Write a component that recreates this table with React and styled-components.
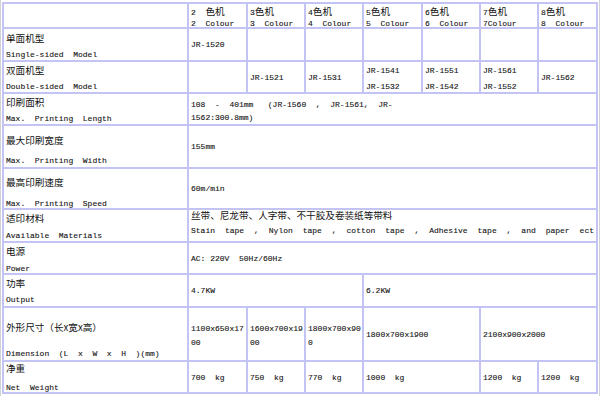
import React from 'react';
import styled, { createGlobalStyle } from 'styled-components';

const Global = createGlobalStyle`
  html, body {
    margin: 0;
    background: #fff;
  }
  body {
    width: 600px;
    height: 396px;
    overflow: hidden;
  }
`;

const Page = styled.div`
  box-sizing: border-box;
  width: 600px;
  height: 396px;
  padding: 2px 1px 0 1px;
  border-left: 1px solid #d2d2d2;
  border-right: 1px solid #d2d2d2;
  font-family: "Liberation Mono", "Noto Sans CJK SC", monospace;
  font-size: 8px;
  color: #111;
  -webkit-text-stroke: 0.1px #111;
`;

const line = '#c3c3f4';

const Sheet = styled.div`
  display: grid;
  grid-template-columns: 185px 59px 58px 58px 59px 58px 58px 59px;
  grid-template-rows: 25px 33px 32px 32px 43px 41px 33px 32px 33px 54px 32px;
  border-left: 2px solid ${line};
  border-top: 2px solid ${line};
`;

const Cell = styled.div`
  box-sizing: border-box;
  grid-column: span ${(p) => p.$span || 1};
  display: flex;
  flex-direction: column;
  justify-content: center;
  gap: ${(p) => p.$gap || 0}px;
  padding: ${(p) => (p.$shift > 0 ? p.$shift : 0)}px 2px
    ${(p) => (p.$shift < 0 ? -p.$shift : 0)}px;
  border-right: 2px solid ${line};
  border-bottom: 2px solid ${line};
  line-height: 11px;
  white-space: pre;
  overflow: visible;
  min-width: 0;
`;

const Zh = styled.span`
  font-family: "Noto Sans CJK SC", sans-serif;
  font-size: 9.6px;
  -webkit-text-stroke: 0;
  color: #111;
`;

const Justify = styled.div`
  white-space: normal;
  text-align: justify;
  text-align-last: justify;
`;

const Label = ({ zh, en, gap, shift }) => (
  <Cell $gap={gap} $shift={shift}>
    <Zh>{zh}</Zh>
    <span>{en}</span>
  </Cell>
);

const heads = [
  ['2  ', '2  Colour'],
  ['3', '3  Colour'],
  ['4', '4  Colour'],
  ['5', '5  Colour'],
  ['6', '6  Colour'],
  ['7', '7Colour'],
  ['8', '8  Colour'],
];

const TwoLine = ({ a, b, gap, shift, span }) => (
  <Cell $gap={gap} $shift={shift} $span={span}>
    <span>{a}</span>
    <span>{b}</span>
  </Cell>
);

export default function App() {
  return (
    <Page>
      <Global />
      <Sheet>
        <Cell />
        {heads.map(([a, b]) => (
          <Cell key={b} $shift={4}>
            <span>
              {a}
              <Zh>色机</Zh>
            </span>
            <span>{b}</span>
          </Cell>
        ))}

        <Label zh="单面机型" en="Single-sided  Model" gap={5} shift={3} />
        <Cell>JR-1520</Cell>
        <Cell />
        <Cell />
        <Cell />
        <Cell />
        <Cell />
        <Cell />

        <Label zh="双面机型" en="Double-sided  Model" gap={5} shift={2} />
        <Cell />
        <Cell>JR-1521</Cell>
        <Cell>JR-1531</Cell>
        <TwoLine a="JR-1541" b="JR-1532" gap={5} shift={2} />
        <TwoLine a="JR-1551" b="JR-1542" gap={5} shift={2} />
        <TwoLine a="JR-1561" b="JR-1552" gap={5} shift={2} />
        <Cell>JR-1562</Cell>

        <Label zh="印刷面积" en="Max.  Printing  Length" gap={5} shift={2} />
        <TwoLine
          a="108  -  401mm   (JR-1560  ,  JR-1561,  JR-"
          b="1562:300.8mm)"
          gap={2}
          shift={3}
          span={7}
        />

        <Label zh="最大印刷宽度" en="Max.  Printing  Width" gap={9} shift={7} />
        <Cell $span={7}>155mm</Cell>

        <Label zh="最高印刷速度" en="Max.  Printing  Speed" gap={10} shift={8} />
        <Cell $span={7}>60m/min</Cell>

        <Label zh="适印材料" en="Available  Materials" gap={6} shift={2} />
        <Cell $span={7} $gap={4} $shift={-6}>
          <Zh>丝带、尼龙带、人字带、不干胶及卷装纸等带料</Zh>
          <Justify>
            Stain tape , Nylon tape , cotton tape , Adhesive tape , and paper ect
          </Justify>
        </Cell>

        <Label zh="电源" en="Power" gap={6} shift={3} />
        <Cell $span={7}>AC: 220V  50Hz/60Hz</Cell>

        <Label zh="功率" en="Output" gap={5} shift={1} />
        <Cell $span={3}>4.7KW</Cell>
        <Cell $span={4}>6.2KW</Cell>

        <Label
          zh="外形尺寸（长x宽x高）"
          en="Dimension  (L  x  W  x  H  )(mm)"
          gap={15}
          shift={12}
        />
        <TwoLine a="1100x650x17" b="00" gap={3} shift={2} />
        <TwoLine a="1600x700x19" b="00" gap={3} shift={2} />
        <TwoLine a="1800x700x90" b="0" gap={3} shift={2} />
        <Cell $span={2}>1800x700x1900</Cell>
        <Cell $span={2}>2100x900x2000</Cell>

        <Label zh="净重" en="Net  Weight" gap={8} shift={1} />
        <Cell>700  kg</Cell>
        <Cell>750  kg</Cell>
        <Cell>770  kg</Cell>
        <Cell $span={2}>1000  kg</Cell>
        <Cell>1200  kg</Cell>
        <Cell>1200  kg</Cell>
      </Sheet>
    </Page>
  );
}
